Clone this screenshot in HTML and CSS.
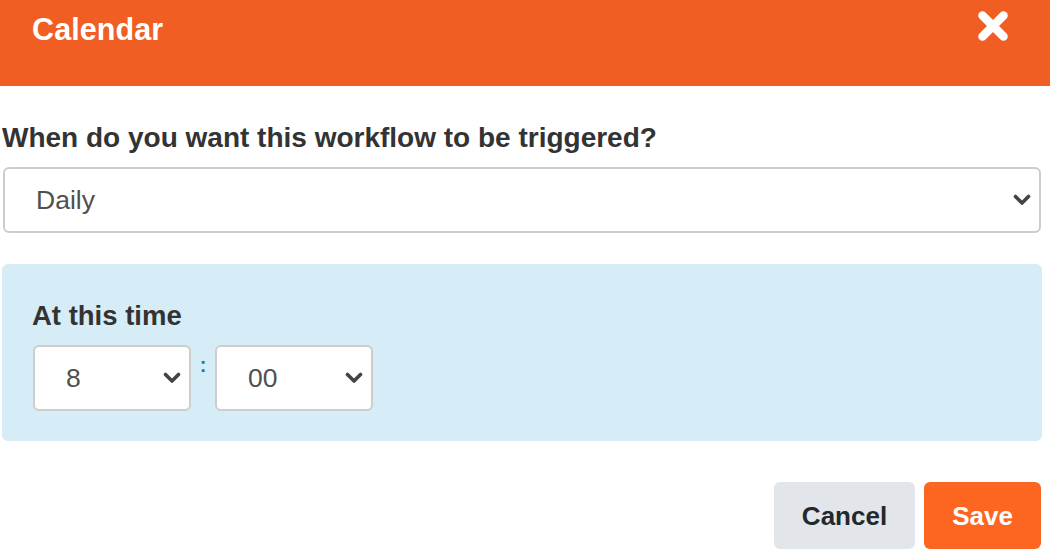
FILE: index.html
```html
<!DOCTYPE html>
<html lang="en">
<head>
<meta charset="utf-8">
<title>Calendar</title>
<link rel="stylesheet" href="styles.css">
</head>
<body>
<div class="modal">
  <header class="modal-header">
    <h1 class="modal-title">Calendar</h1>
    <button class="close-btn" aria-label="Close">
      <svg width="30" height="30" viewBox="0 0 30 30"><path d="M4.5 4.5 L25.5 25.5 M25.5 4.5 L4.5 25.5" stroke="#fff" stroke-width="8.5" stroke-linecap="round" fill="none"/></svg>
    </button>
  </header>
  <main class="modal-body">
    <label class="field-label">When do you want this workflow to be triggered?</label>
    <div class="select select-wide">
      <span class="select-value">Daily</span>
      <svg class="chevron" width="18" height="12" viewBox="0 0 18 12"><path d="M2.5 2.5 L9 9 L15.5 2.5" stroke="#444" stroke-width="3.6" stroke-linecap="round" stroke-linejoin="round" fill="none"/></svg>
    </div>
    <section class="time-panel">
      <div class="panel-label">At this time</div>
      <div class="time-row">
        <div class="select select-small">
          <span class="select-value">8</span>
          <svg class="chevron" width="18" height="12" viewBox="0 0 18 12"><path d="M2.5 2.5 L9 9 L15.5 2.5" stroke="#444" stroke-width="3.6" stroke-linecap="round" stroke-linejoin="round" fill="none"/></svg>
        </div>
        <span class="colon">:</span>
        <div class="select select-small">
          <span class="select-value">00</span>
          <svg class="chevron" width="18" height="12" viewBox="0 0 18 12"><path d="M2.5 2.5 L9 9 L15.5 2.5" stroke="#444" stroke-width="3.6" stroke-linecap="round" stroke-linejoin="round" fill="none"/></svg>
        </div>
      </div>
    </section>
    <div class="actions">
      <button class="btn btn-cancel">Cancel</button>
      <button class="btn btn-save">Save</button>
    </div>
  </main>
</div>
</body>
</html>
```
FILE: styles.css
```css
* { box-sizing: border-box; }
html, body { margin: 0; padding: 0; background: #fff; }
body { font-family: "Liberation Sans", Arial, sans-serif; color: #333; }

.modal { width: 1050px; }

.modal-header {
  height: 86px;
  background: #f05e23;
  display: flex;
  justify-content: space-between;
  align-items: flex-start;
  padding: 0 42px 0 32px;
}
.modal-title {
  margin: 0;
  padding-top: 14px;
  font-size: 30.5px;
  line-height: 31px;
  font-weight: 700;
  color: #fff;
  letter-spacing: 0.1px;
}
.close-btn {
  margin-top: 11px;
  padding: 0;
  border: 0;
  background: none;
  width: 30px;
  height: 30px;
  display: block;
}
.close-btn svg { display: block; }

.modal-body {
  padding: 0 8px 0 2px;
}
.field-label {
  display: block;
  margin-top: 35px;
  font-size: 28px;
  line-height: 34px;
  font-weight: 700;
  color: #333;
}

.select {
  display: flex;
  align-items: center;
  justify-content: space-between;
  height: 66px;
  background: #fff;
  border: 2px solid #cdcdcd;
  border-radius: 6px;
  padding: 0 8px 0 31px;
}
.select-value {
  font-size: 26.5px;
  color: #505050;
}
.chevron { display: block; }
.select-wide {
  margin: 12px 1px 0 1px;
}
.select-small {
  width: 158px;
}

.time-panel {
  margin-top: 31px;
  background: #d6ecf6;
  border-radius: 6px;
  padding: 36px 30px 30px 30px;
}
.panel-label {
  font-size: 27.5px;
  line-height: 32px;
  font-weight: 700;
  color: #333;
}
.time-row {
  display: flex;
  align-items: center;
  margin-top: 13px;
  padding-left: 1px;
}
.colon {
  width: 24px;
  text-align: center;
  font-size: 20px;
  font-weight: 700;
  color: #17829f;
  padding-bottom: 26px;
}

.actions {
  display: flex;
  justify-content: flex-end;
  gap: 9px;
  margin-top: 41px;
  padding-right: 1px;
}
.btn {
  height: 67px;
  border: 0;
  border-radius: 6px;
  padding-top: 3px;
  font-family: "Liberation Sans", Arial, sans-serif;
  font-size: 26px;
  font-weight: 700;
}
.btn-cancel {
  width: 141px;
  background: #e2e6ea;
  color: #23282c;
}
.btn-save {
  width: 117px;
  background: #fd6621;
  color: #fff;
}
```
